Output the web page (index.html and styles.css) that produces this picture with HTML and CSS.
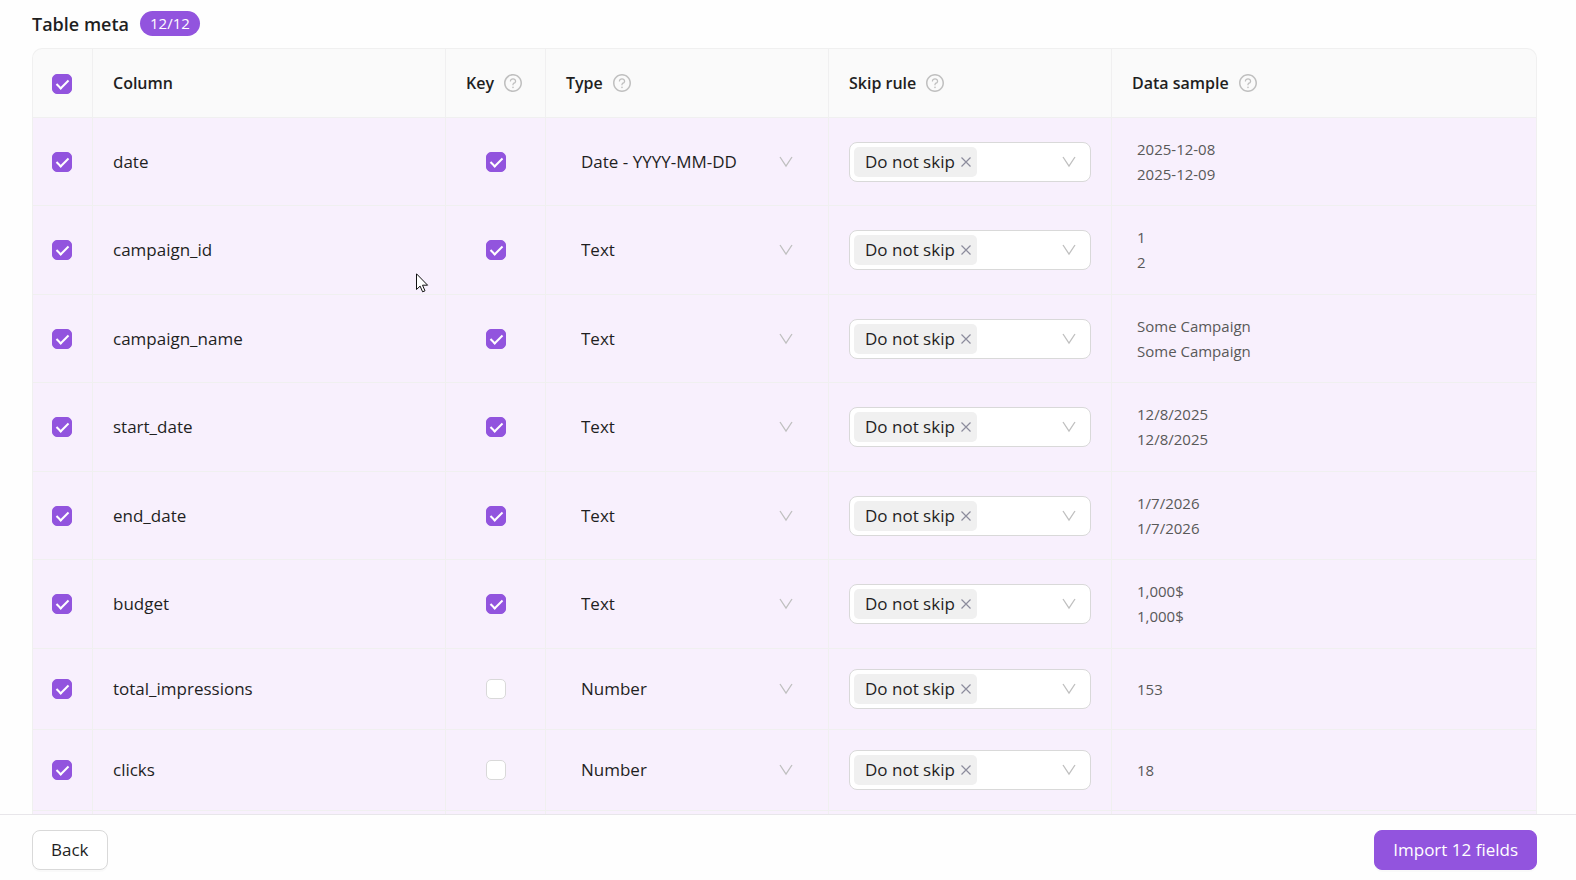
FILE: index.html
```html
<!DOCTYPE html>
<html lang="en">
<head>
    <meta charset="UTF-8">
    <meta name="viewport" content="width=device-width, initial-scale=1.0">
    <title>Table meta</title>
    <link rel="stylesheet" href="styles.css">
</head>
<body>
    <svg class="sprite" aria-hidden="true">
        <symbol id="help" viewBox="64 64 896 896">
            <path d="M512 64C264.600 64 64 264.600 64 512s200.600 448 448 448 448-200.600 448-448S759.400 64 512 64zm0 820c-205.400 0-372-166.600-372-372s166.600-372 372-372 372 166.600 372 372-166.600 372-372 372z"/>
            <path d="M623.600 316.700C593.600 290.400 554 276 512 276s-81.600 14.500-111.600 40.700C369.200 344 352 380.700 352 420v7.600c0 4.400 3.600 8 8 8h48c4.400 0 8-3.600 8-8V420c0-44.100 43.100-80 96-80s96 35.900 96 80c0 31.100-22 59.600-56.100 72.700-21.200 8.100-39.200 22.300-52.100 40.900-13.100 19-19.900 41.800-19.900 64.900V620c0 4.400 3.600 8 8 8h48c4.400 0 8-3.600 8-8v-22.700a48.300 48.300 0 0 1 30.900-44.800c59-22.700 97.100-74.700 97.100-132.500.100-39.300-17.100-76-48.300-103.300zM472 732a40 40 0 1 0 80 0 40 40 0 1 0-80 0z"/>
        </symbol>
        <symbol id="down" viewBox="0 0 14 14">
            <path d="M1 2l6 9 6-9" fill="none" stroke="currentColor" stroke-width="1.300"/>
        </symbol>
        <symbol id="close" viewBox="0 0 10 10">
            <path d="M.5.5l9 9m0-9l-9 9" fill="none" stroke="currentColor" stroke-width="1.200"/>
        </symbol>
    </svg>

    <main class="content">
        <div class="title">
            <h2>Table meta</h2>
            <span class="badge">12/12</span>
        </div>
        <table class="meta-table">
            <thead>
                <tr>
                    <th class="col-check"><input type="checkbox" aria-label="Select all" checked></th>
                    <th class="col-name">Column</th>
                    <th class="col-key"><span class="head">Key <svg class="help"><use href="#help"/></svg></span></th>
                    <th class="col-type"><span class="head">Type <svg class="help"><use href="#help"/></svg></span></th>
                    <th class="col-skip"><span class="head">Skip rule <svg class="help"><use href="#help"/></svg></span></th>
                    <th><span class="head">Data sample <svg class="help"><use href="#help"/></svg></span></th>
                </tr>
            </thead>
            <tbody id="rows"></tbody>
            <tfoot>
                <tr><td></td><td></td><td></td><td></td><td></td><td></td></tr>
            </tfoot>
        </table>
    </main>

    <footer class="footer">
        <button type="button" class="btn">Back</button>
        <button type="button" class="btn btn-primary">Import 12 fields</button>
    </footer>

    <svg class="pointer" viewBox="0 0 13 20" aria-hidden="true">
        <path d="M.5.800v15.700l3.600-3.400 2.500 5.700 2.400-1-2.500-5.600h5.100z" fill="#fff" stroke="#111"/>
    </svg>

    <script>
        const fields = [
            { name: 'date', key: true, type: 'Date - YYYY-MM-DD', sample: ['2025-12-08', '2025-12-09'] },
            { name: 'campaign_id', key: true, type: 'Text', sample: ['1', '2'] },
            { name: 'campaign_name', key: true, type: 'Text', sample: ['Some Campaign', 'Some Campaign'] },
            { name: 'start_date', key: true, type: 'Text', sample: ['12/8/2025', '12/8/2025'] },
            { name: 'end_date', key: true, type: 'Text', sample: ['1/7/2026', '1/7/2026'] },
            { name: 'budget', key: true, type: 'Text', sample: ['1,000$', '1,000$'] },
            { name: 'total_impressions', key: false, type: 'Number', sample: ['153'] },
            { name: 'clicks', key: false, type: 'Number', sample: ['18'] }
        ];
        const types = ['Text', 'Number', 'Date - YYYY-MM-DD'];

        document.getElementById('rows').innerHTML = fields.map(f => `
            <tr class="${f.sample.length > 1 ? 'tall' : ''}">
                <td class="col-check"><input type="checkbox" aria-label="Import ${f.name}" checked></td>
                <td>${f.name}</td>
                <td class="col-key"><input type="checkbox" aria-label="Key ${f.name}" ${f.key ? 'checked' : ''}></td>
                <td>
                    <div class="select">
                        <select aria-label="Type of ${f.name}">
                            ${types.map(t => `<option ${t === f.type ? 'selected' : ''}>${t}</option>`).join('')}
                        </select>
                        <svg class="arrow"><use href="#down"/></svg>
                    </div>
                </td>
                <td>
                    <div class="select select-tags">
                        <span class="tag">Do not skip <button type="button" aria-label="Remove"><svg><use href="#close"/></svg></button></span>
                        <select aria-label="Skip rule of ${f.name}"><option></option></select>
                        <svg class="arrow"><use href="#down"/></svg>
                    </div>
                </td>
                <td><div class="sample">${f.sample.map(s => `<div>${s}</div>`).join('')}</div></td>
            </tr>`).join('');
    </script>
</body>
</html>
```
FILE: styles.css
```css
*, *::after {
    box-sizing: border-box;
}
body {
    display: flex;
    flex-direction: column;
    height: 100vh;
    margin: 0;
    overflow: hidden;
    background: #fefefe;
    color: #1f1f1f;
    font-family: "Segoe UI", "Open Sans", sans-serif;
    font-size: 17px;
    line-height: 28px;
}
button, select {
    font: inherit;
    color: inherit;
}
.sprite {
    display: none;
}
.content {
    flex: 1;
    min-height: 0;
    overflow: hidden;
    padding: 10px 39px 0 32px;
}
.title {
    display: flex;
    align-items: center;
    gap: 11px;
    height: 27px;
    margin-bottom: 11px;
}
.title h2 {
    margin: 0;
    font-size: 18px;
    font-weight: 600;
}
.badge {
    padding: 0 10px;
    border-radius: 13px;
    background: #9254de;
    color: #fff;
    font-size: 15px;
    line-height: 25px;
}

/* table */
.meta-table {
    width: 100%;
    table-layout: fixed;
    border-spacing: 0;
}
th, td {
    padding: 0 20px;
    border-top: 1px solid #f0f0f0;
    border-left: 1px solid #f0f0f0;
    text-align: left;
    white-space: nowrap;
}
th:last-child, td:last-child {
    border-right: 1px solid #f0f0f0;
}
th {
    height: 69px;
    background: #fafafa;
    font-size: 16px;
    font-weight: 600;
}
th:first-child {
    border-top-left-radius: 10px;
}
th:last-child {
    border-top-right-radius: 10px;
}
td {
    height: 81px;
    background: #f8f0fd;
}
.tall td {
    height: 88px;
}
.tall:nth-child(even) td {
    height: 89px;
}
.col-check {
    width: 60px;
    padding: 0 19px;
}
.col-name {
    width: 353px;
}
.col-key {
    width: 100px;
}
td.col-key {
    padding: 0;
    text-align: center;
}
.col-type, .col-skip {
    width: 283px;
}
.head {
    display: flex;
    align-items: center;
    gap: 10px;
}
.help {
    width: 18px;
    height: 18px;
    fill: #bfbfbf;
}

input[type="checkbox"] {
    appearance: none;
    display: inline-block;
    position: relative;
    width: 20px;
    height: 20px;
    margin: 0 0 2px;
    border: 1px solid #d9d9d9;
    border-radius: 5px;
    background: #fff;
    vertical-align: middle;
}
input[type="checkbox"]:checked {
    border-color: #9254de;
    background: #9254de;
}
input[type="checkbox"]:checked::after {
    content: "";
    position: absolute;
    left: 6px;
    top: 2px;
    width: 7px;
    height: 12px;
    border: solid #fff;
    border-width: 0 2px 2px 0;
    transform: rotate(45deg);
}

/* selects */
.select {
    display: flex;
    align-items: center;
    position: relative;
    height: 40px;
    border: 1px solid transparent;
    border-radius: 8px;
}
.select select {
    flex: 1;
    min-width: 0;
    height: 38px;
    padding: 0 34px 0 14px;
    border: 0;
    background: transparent;
    appearance: none;
}
.select-tags {
    padding-left: 4px;
    border-color: #d9d9d9;
    background: #fff;
}
.arrow {
    position: absolute;
    right: 14px;
    top: 12px;
    width: 14px;
    height: 14px;
    color: #bfbfbf;
    pointer-events: none;
}
.tag {
    display: flex;
    align-items: center;
    gap: 6px;
    height: 30px;
    padding: 0 6px 0 11px;
    border-radius: 5px;
    background: #f0f0f0;
}
.tag button {
    display: flex;
    padding: 0;
    border: 0;
    background: none;
    color: #8c8c9c;
}
.tag svg {
    width: 10px;
    height: 10px;
}
.sample {
    padding-left: 5px;
    color: #595959;
    font-size: 15px;
    line-height: 25px;
}

/* footer */
.footer {
    display: flex;
    justify-content: space-between;
    padding: 15px 39px 10px 32px;
    border-top: 1px solid #e8e6ea;
}
.btn {
    height: 40px;
    padding: 0 18px;
    border: 1px solid #d9d9d9;
    border-radius: 8px;
    background: #fff;
    box-shadow: 0 2px 0 #00000005;
}
.btn-primary {
    border-color: #9254de;
    background: #9254de;
    color: #fff;
}

.pointer {
    position: absolute;
    left: 416px;
    top: 273px;
    width: 13px;
    height: 20px;
}
```
